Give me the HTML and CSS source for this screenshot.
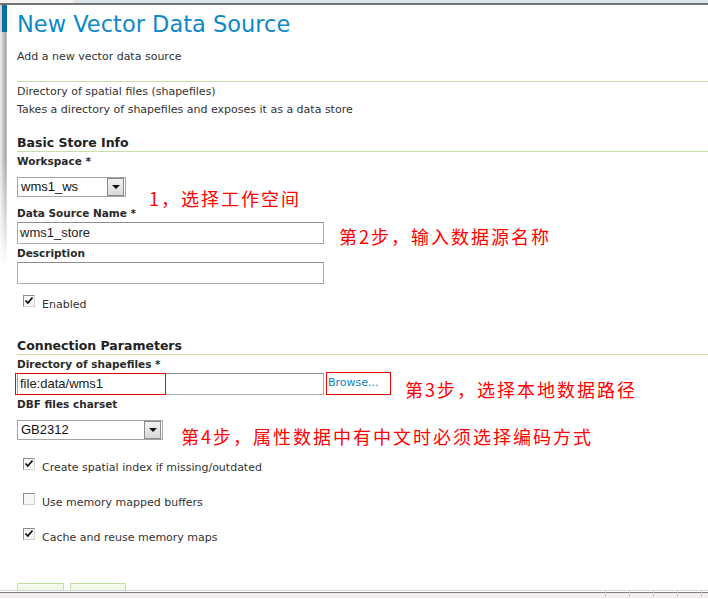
FILE: index.html
```html
<!DOCTYPE html>
<html lang="en">
<head>
    <meta charset="UTF-8">
    <title>New Vector Data Source</title>
    <link rel="stylesheet" href="styles.css">
</head>
<body>

<div class="screen">
    <div class="topbar"></div>

    <div class="page">
        <!-- left edge of the panel -->
        <div class="side">
            <div class="side-tab"></div>
            <div class="side-shade"></div>
        </div>

        <div class="content">
            <h1 class="title">New Vector Data Source</h1>
            <p class="subtitle">Add a new vector data source</p>

            <div class="store-type">
                <p>Directory of spatial files (shapefiles)</p>
                <p>Takes a directory of shapefiles and exposes it as a data store</p>
            </div>

            <!-- Basic store info -->
            <h3 class="section-title section-basic">Basic Store Info</h3>

            <label class="field-label first">Workspace *</label>
            <div class="control-row row-select">
                <div class="select select-ws"><span class="select-text">wms1_ws</span><span class="arrow"></span></div>
                <span class="note note-1">1，选择工作空间</span>
            </div>

            <label class="field-label gap">Data Source Name *</label>
            <div class="control-row row-input">
                <div class="text-input">wms1_store</div>
                <span class="note note-2">第2步，输入数据源名称</span>
            </div>

            <label class="field-label">Description</label>
            <div class="control-row row-input">
                <div class="text-input"></div>
            </div>

            <div class="check-row check-enabled">
                <span class="checkbox"><svg width="10" height="10" viewBox="0 0 10 10"><path d="M1.5 4.5 L3.8 7 L8.5 1.5" fill="none" stroke="#111" stroke-width="1.8"/></svg></span>
                <span class="check-label">Enabled</span>
            </div>

            <!-- Connection parameters -->
            <h3 class="section-title section-conn">Connection Parameters</h3>

            <label class="field-label first">Directory of shapefiles *</label>
            <div class="control-row row-input">
                <div class="text-input marked">file:data/wms1</div>
                <a class="browse" href="#">Browse...</a>
                <span class="note note-3">第3步，选择本地数据路径</span>
            </div>

            <label class="field-label">DBF files charset</label>
            <div class="control-row row-select">
                <div class="select select-charset"><span class="select-text">GB2312</span><span class="arrow"></span></div>
                <span class="note note-4">第4步，属性数据中有中文时必须选择编码方式</span>
            </div>

            <div class="check-row check-first">
                <span class="checkbox"><svg width="10" height="10" viewBox="0 0 10 10"><path d="M1.5 4.5 L3.8 7 L8.5 1.5" fill="none" stroke="#111" stroke-width="1.8"/></svg></span>
                <span class="check-label">Create spatial index if missing/outdated</span>
            </div>
            <div class="check-row">
                <span class="checkbox"></span>
                <span class="check-label">Use memory mapped buffers</span>
            </div>
            <div class="check-row">
                <span class="checkbox"><svg width="10" height="10" viewBox="0 0 10 10"><path d="M1.5 4.5 L3.8 7 L8.5 1.5" fill="none" stroke="#111" stroke-width="1.8"/></svg></span>
                <span class="check-label">Cache and reuse memory maps</span>
            </div>

            <div class="buttons">
                <span class="btn btn-save"></span>
                <span class="btn btn-cancel"></span>
            </div>
        </div>
    </div>

    <!-- browser status bar -->
    <div class="statusbar">
        <div class="status-cell main"></div>
        <div class="status-cell"></div>
        <div class="status-cell"></div>
        <div class="status-cell"></div>
        <div class="status-cell"></div>
        <div class="status-cell last"></div>
    </div>
</div>

</body>
</html>
```
FILE: styles.css
```css
/* General */
body {
    margin: 0;
    padding: 0;
    font-family: "DejaVu Sans", Verdana, sans-serif;
    font-size: 11px;
    color: #333;
    background-color: #fff;
    overflow: hidden;
}

p {
    margin: 0;
}

.screen {
    width: 708px;
    height: 599px;
    display: flex;
    flex-direction: column;
}

/* Top strip */
.topbar {
    height: 3px;
    flex-shrink: 0;
    background: linear-gradient(to right, #f2f2f2 0, #f2f2f2 73px, #dfe3ee 73px);
    border-bottom: 2px solid #727272;
}

.page {
    height: 585px;
    display: flex;
    overflow: hidden;
}

/* Left edge */
.side {
    width: 7px;
    flex-shrink: 0;
}

.side-tab {
    height: 27px;
    border-left: 2px solid #d4d4d4;
    background-color: #0b6d9a;
}

.side-shade {
    height: 235px;
    background:
        linear-gradient(to bottom, rgba(255, 255, 255, 0) 55%, #fff),
        linear-gradient(to right, #f0f0f0, #a9a9a9 80%, #cfcfcf);
}

.content {
    flex: 1;
    padding-left: 10px;
}

/* Heading */
.title {
    margin: 5px 0 0 0;
    font-size: 22.5px;
    line-height: 28px;
    font-weight: normal;
    color: #0d89c6;
}

.subtitle {
    margin-top: 11px;
    line-height: 16px;
}

.store-type {
    margin-top: 16px;
    border-top: 1px solid #c7dfa7;
    padding-top: 1px;
}

.store-type p {
    line-height: 18px;
}

/* Sections */
.section-title {
    margin: 0;
    font-size: 12.5px;
    line-height: 17px;
    font-weight: bold;
    color: #222;
    border-bottom: 1px solid #c7dfa7;
}

.section-basic {
    margin-top: 15px;
}

.section-conn {
    margin-top: 24px;
}

.field-label {
    display: block;
    margin-top: 1px;
    font-size: 10.5px;
    line-height: 16px;
    font-weight: bold;
    color: #2a2a2a;
}

.field-label.first {
    margin-top: 1px;
}

.field-label.gap {
    margin-top: 8px;
}

/* Controls */
.control-row {
    display: flex;
    align-items: flex-start;
    margin-top: 1px;
}

.control-row.row-select {
    margin-top: 8px;
    height: 20px;
}

.control-row.row-input {
    height: 22px;
}

.text-input {
    position: relative;
    width: 307px;
    height: 22px;
    box-sizing: border-box;
    border: 1px solid #ababab;
    border-top-color: #8e8e8e;
    padding-left: 2px;
    font-family: "Liberation Sans", Arial, sans-serif;
    font-size: 13px;
    line-height: 20px;
    color: #222;
}

/* red annotation box drawn over the path field */
.text-input.marked::after {
    content: "";
    position: absolute;
    left: -3px;
    top: -1px;
    width: 149px;
    height: 20px;
    border: 1px solid #ee0000;
}

.select {
    display: flex;
    height: 20px;
    box-sizing: border-box;
    border: 1px solid #a4a4a4;
    background-color: #fff;
}

.select-ws {
    width: 109px;
}

.select-charset {
    width: 146px;
}

.select-text {
    flex: 1;
    padding-left: 3px;
    font-family: "Liberation Sans", Arial, sans-serif;
    font-size: 13px;
    line-height: 18px;
    color: #111;
}

.arrow {
    width: 15px;
    height: 16px;
    margin: 0 1px 0 0;
    border: 1px solid #8a8a8a;
    background: linear-gradient(#f2f2f2, #d9d9d9);
    display: flex;
    align-items: center;
    justify-content: center;
}

.arrow::before {
    content: "";
    border-top: 4px solid #111;
    border-left: 4px solid transparent;
    border-right: 4px solid transparent;
}

.browse {
    margin: -1px 0 0 2px;
    width: 62px;
    height: 21px;
    border: 1px solid #ee0000;
    padding-left: 1px;
    color: #0a86c2;
    text-decoration: none;
    line-height: 19px;
}

/* Red notes */
.note {
    font-family: "Noto Sans CJK SC", sans-serif;
    font-size: 18px;
    line-height: 18px;
    letter-spacing: 2px;
    color: #ff0000;
    white-space: nowrap;
}

.note-1 {
    margin: 12px 0 0 23px;
}

.note-2 {
    margin: 5px 0 0 15px;
}

.note-3 {
    margin: 7px 0 0 14px;
}

.note-4 {
    margin: 7px 0 0 18px;
}

/* Checkboxes */
.check-row {
    display: flex;
    align-items: flex-start;
    margin-top: 17px;
    padding-left: 6px;
}

.check-row.check-enabled {
    margin-top: 11px;
}

.check-row.check-first {
    margin-top: 18px;
}

.checkbox {
    width: 12px;
    height: 12px;
    box-sizing: border-box;
    border: 1px solid #8d8d8d;
    border-right-color: #d2d2d2;
    border-bottom-color: #d2d2d2;
    background-color: #f7f7f7;
    display: flex;
    align-items: center;
    justify-content: center;
}

.check-label {
    margin: 2px 0 0 7px;
    line-height: 16px;
    color: #333;
}

/* Buttons (cut off by the status bar) */
.buttons {
    display: flex;
    gap: 6px;
    margin-top: 37px;
}

.btn {
    height: 14px;
    border: 1px solid #c3df9d;
    background: linear-gradient(#f7fbf1, #e2efd2);
}

.btn-save {
    width: 45px;
}

.btn-cancel {
    width: 54px;
}

/* Status bar */
.statusbar {
    flex-shrink: 0;
    height: 7px;
    border-top: 1px solid #d6d6d6;
    box-shadow: inset 0 1px 0 #fff, inset 0 2px 0 #7f7f7f;
    background-color: #f1eded;
    display: flex;
}

.status-cell {
    width: 24px;
    border-right: 1px solid #cfc9c9;
    box-sizing: border-box;
}

.status-cell.main {
    width: 606px;
}

.status-cell.last {
    width: 6px;
    border-right: 0;
}
```
